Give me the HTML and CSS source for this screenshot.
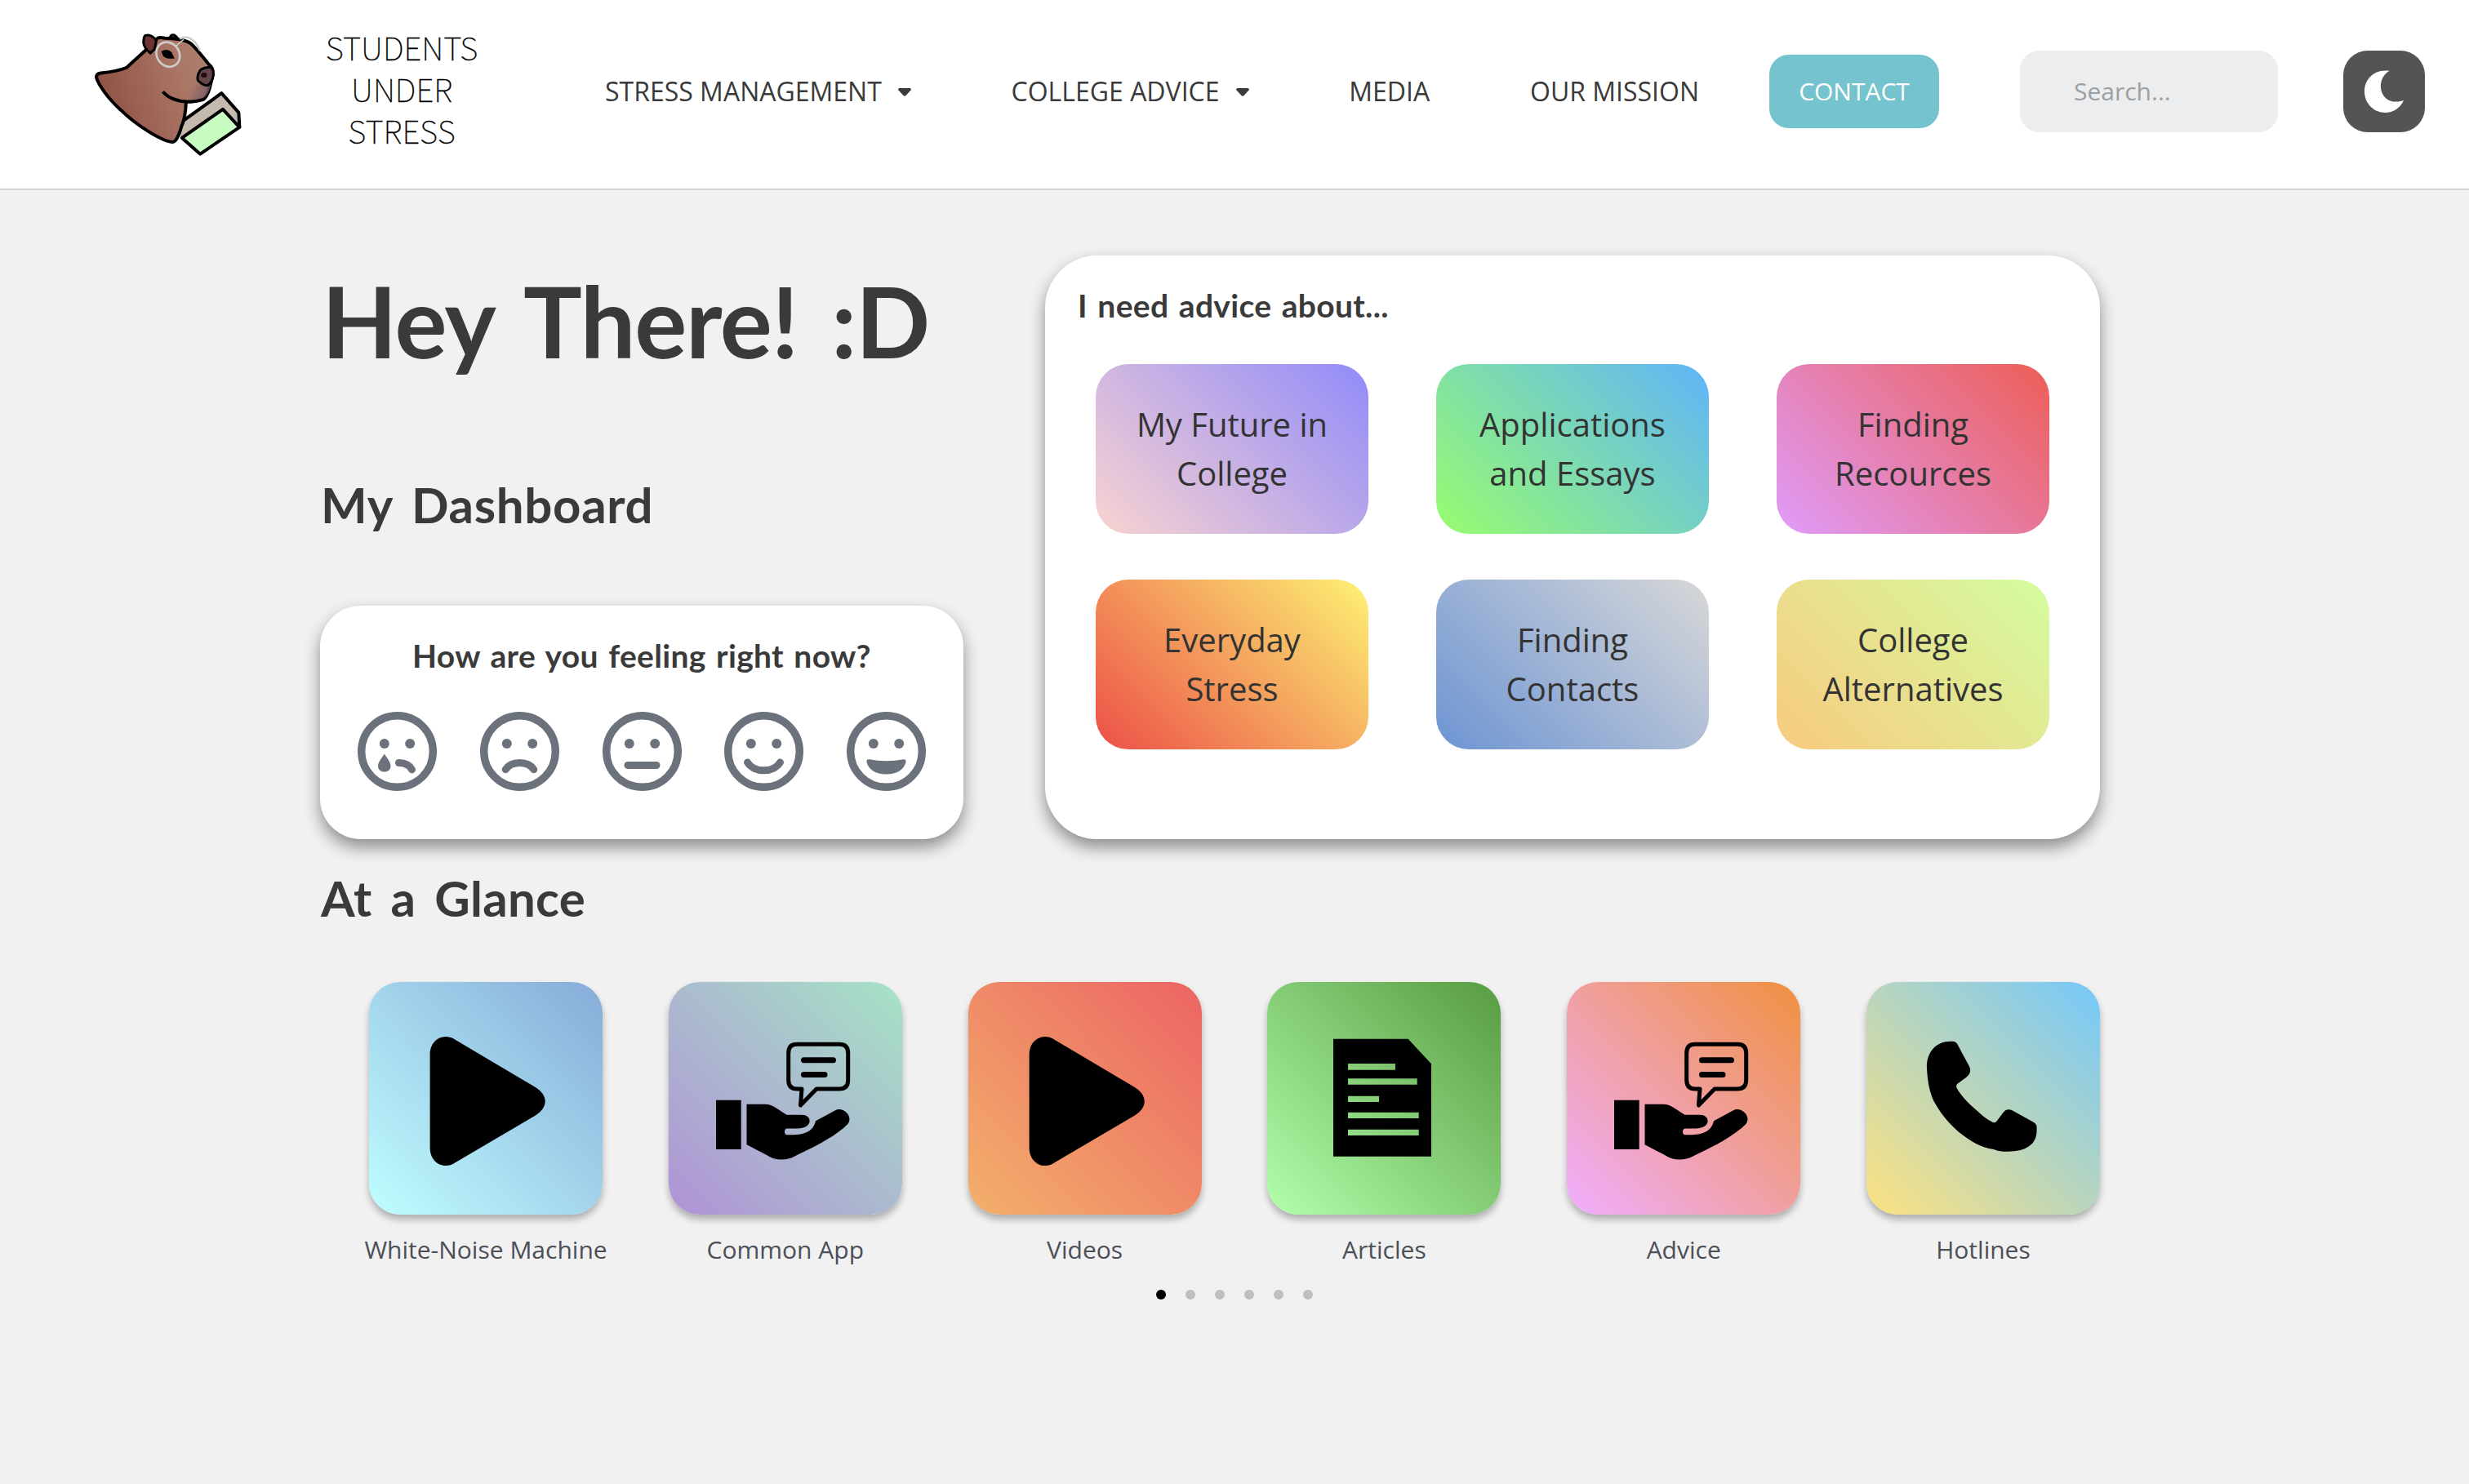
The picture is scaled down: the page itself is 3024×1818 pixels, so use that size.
FILE: index.html
```html
<!DOCTYPE html>
<html lang="en">
<head>
<meta charset="utf-8">
<title>Students Under Stress</title>
<link rel="stylesheet" href="styles.css">
</head>
<body>
<svg class="defs" width="0" height="0" aria-hidden="true">
  <defs>
    <symbol id="play" viewBox="0 0 286 285">
      <path d="M74.6 89C74.6 76 83 67 94 67C99 67 102 68.500 106 71L203 128.500C220 138.500 220 154 203 164L106 221C102 223.500 99 225 94 225C83 225 74.600 216 74.600 203Z"/>
    </symbol>
    <symbol id="advice" viewBox="0 0 286 285">
      <path d="M58 144.700H88.700V205H58ZM95.500 149.700H118C128 149.700 136 158 144.500 162.700H163C169 162.700 172.600 166 172.600 170.300C172.600 176 166 179.500 158 179.500H145C141 179.500 141 187.300 145 187.300C160 187.500 176 187 180 170.300L202.600 158C212 151 226 163 220 173C219 175 217 176 214.700 178.500C196 194 172 205 154 213.700C144 219 130 219 120 212L95.500 199.300Z"/>
      <path fill="none" stroke="#000" stroke-width="5" stroke-linejoin="round" d="M157 76.300H209Q219.700 76.300 219.700 87V120Q219.700 131 209 131H181L161.500 151L163 131H157Q146.700 131 146.700 120V87Q146.700 76.300 157 76.300Z"/>
      <path fill="none" stroke="#000" stroke-width="7" stroke-linecap="round" d="M165.500 95.700H201.500M165.500 113.400H191"/>
    </symbol>
    <symbol id="article" viewBox="0 0 286 285">
      <path fill-rule="evenodd" d="M81 69.700H172.600L201 100.300V213.700H81ZM99 100V107.700H157V100ZM99 118.300V125.700H183.700V118.300ZM99 139.700V147H137V139.700ZM99 159.700V167H185.700V159.700ZM99 180.700V188H185.700V180.700Z"/>
    </symbol>
    <symbol id="phone" viewBox="0 0 286 285">
      <path d="M108.500 73.300C88 70 73 84 74 106C75 124 78 139 85 150.300C93 164 102 174 113 183.700C127 195 141 203 155.700 205C162 207.500 166 207.700 172 207.700C194 208 209 200 208.600 181C208.600 177 209 174.500 205 172L179 157.500C174 155 170 156 167.500 160L159.500 170.500C158 172.500 156 172.500 154 171.500C147 168 142 164 137 159C126 150 116 140 110.400 129.500C109.500 127.500 110.500 125.500 112 124.300L122 117C128 112 128 108 126 103.500L111 75.500Z"/>
    </symbol>
  </defs>
</svg>

<header class="header">
  <svg class="logo" viewBox="75 60 545 455" aria-label="Capybara reading a book">
    <defs>
      <linearGradient id="fur" x1="85" y1="300" x2="515" y2="170" gradientUnits="userSpaceOnUse">
        <stop offset="0" stop-color="#8f5145"/><stop offset=".7" stop-color="#aa7564"/><stop offset="1" stop-color="#b08070"/>
      </linearGradient>
      <linearGradient id="chin" x1="425" y1="270" x2="490" y2="300" gradientUnits="userSpaceOnUse">
        <stop offset="0" stop-color="#735866" stop-opacity="0"/><stop offset="1" stop-color="#735866" stop-opacity=".9"/>
      </linearGradient>
    </defs>
    <g stroke="#000" stroke-linejoin="round" stroke-linecap="round">
      <path fill="#c4bbae" stroke="none" d="M396 388L543 282L606 353L609 405L548 342L392 443Z"/>
      <path fill="none" stroke-width="12" d="M406 381L543 282L606 353L609 405"/>
      <path fill="#c8fdc2" stroke-width="12" d="M398 446L548 341L609 407L465 505Z"/>
      <path fill="#6d3532" stroke-width="9" d="M354 80Q356 65 370 69Q382 76 382 84Z"/>
      <path fill="url(#fur)" stroke-width="12" d="M310 79Q320 77 335 80C365 81 412 84 432 101C450 117 475 150 498 178Q514 190 511 215L500 262Q492 292 478 304Q450 314 413 314C412 345 405 385 396 405C388 432 378 462 362 461C325 458 230 400 175 345C125 300 91 250 84 224Q84 210 100 208Q160 203 195 188L265 124Z"/>
      <path fill="url(#chin)" stroke="none" d="M430 240L504 250L498 270Q489 294 475 300L425 307Z"/>
      <path fill="none" stroke-width="12" stroke-linecap="butt" d="M328 276C345 297 378 312 415 313"/>
      <path fill="#6d3532" stroke-width="9" d="M264 70Q285 64 304 88L298 120L282 135Q256 112 257 95Q257 74 264 70Z"/>
      <path fill="#64464a" stroke-width="9" d="M465 198Q476 186 506 187Q517 203 511 226Q505 246 492 254Q475 254 457 236Q451 217 465 198Z"/>
    </g>
    <ellipse cx="479" cy="216" rx="11" ry="9" fill="#240a0c"/>
    <path d="M322 129Q345 116 360 132L371 154Q340 159 329 145Z"/>
    <g fill="none" stroke="#ccc" stroke-width="8">
      <ellipse cx="347" cy="140" rx="41" ry="47" transform="rotate(-35 347 140)"/>
      <path stroke-width="5" d="M376 109L404 85"/>
      <path stroke-width="7" d="M390 83C420 66 450 87 464 127"/>
    </g>
  </svg>
  <div class="brand">STUDENTS<br>UNDER<br>STRESS</div>
  <nav class="nav">
    <a class="nav-item">STRESS MANAGEMENT<svg class="caret" viewBox="0 0 16 10"><path d="M1.500 0H14.500Q16.500 .5 15.500 2.500L9.500 9Q8 10.500 6.500 9L.5 2.500Q-.5 .5 1.500 0Z"/></svg></a>
    <a class="nav-item">COLLEGE ADVICE<svg class="caret" viewBox="0 0 16 10"><path d="M1.500 0H14.500Q16.500 .5 15.500 2.500L9.500 9Q8 10.500 6.500 9L.5 2.500Q-.5 .5 1.500 0Z"/></svg></a>
    <a class="nav-item">MEDIA</a>
    <a class="nav-item">OUR MISSION</a>
  </nav>
  <a class="contact">CONTACT</a>
  <div class="search">Search...</div>
  <button class="theme" aria-label="Dark mode">
    <svg viewBox="0 0 48 52"><path d="M30.500 .8C17 9 17 27 27 35C33 39.500 40 39.300 48 37C44 46 35 52 25.500 52C11 52 0 40.500 0 26C0 11 12-2 30.500 .8Z" fill="#fff"/></svg>
  </button>
</header>

<main class="main">
  <div class="top">
    <div class="intro">
      <h1 class="hello">Hey There! :D</h1>
      <h2 class="section-title dashboard">My Dashboard</h2>
      <section class="card feeling">
        <h3 class="card-title mood-title">How are you feeling right now?</h3>
        <div class="faces">
          <svg class="face" viewBox="-48.500 -48.500 97 97"><circle class="ring" r="43.800"/><circle cx="-15.700" cy="-9.500" r="6"/><circle cx="15.700" cy="-9.500" r="6"/><path d="M-15.700 3C-12 9-8 13-8 18C-8 22.500-11.500 25-15.700 25S-23.500 22.500-23.500 18C-23.500 13-19.500 9-15.700 3Z"/><path class="mouth" d="M2 14Q13.500 14 18 22.300"/></svg>
          <svg class="face" viewBox="-48.500 -48.500 97 97"><circle class="ring" r="43.800"/><circle cx="-15.700" cy="-9.500" r="6"/><circle cx="15.700" cy="-9.500" r="6"/><path class="mouth" d="M-17.300 22.200C-10 11.300 10 11.300 17.300 22.200"/></svg>
          <svg class="face" viewBox="-48.500 -48.500 97 97"><circle class="ring" r="43.800"/><circle cx="-15.700" cy="-9.500" r="6"/><circle cx="15.700" cy="-9.500" r="6"/><rect x="-22" y="12.500" width="44" height="9" rx="4.500"/></svg>
          <svg class="face" viewBox="-48.500 -48.500 97 97"><circle class="ring" r="43.800"/><circle cx="-15.700" cy="-9.500" r="6"/><circle cx="15.700" cy="-9.500" r="6"/><path class="mouth" d="M-20 13.500C-12 26.500 12 26.500 20 13.500"/></svg>
          <svg class="face" viewBox="-48.500 -48.500 97 97"><circle class="ring" r="43.800"/><circle cx="-15.700" cy="-9.500" r="6"/><circle cx="15.700" cy="-9.500" r="6"/><path d="M-21 9.700Q0 14 21 9.700Q24.500 9.500 24 13C22 22 13 28 0 28S-22 22-24 13Q-24.500 9.500-21 9.700Z"/></svg>
        </div>
      </section>
    </div>
    <section class="card advice">
      <h3 class="card-title advice-title">I need advice about...</h3>
      <div class="topics">
        <a class="topic future">My Future in<br>College</a>
        <a class="topic apps">Applications<br>and Essays</a>
        <a class="topic resources">Finding<br>Recources</a>
        <a class="topic everyday">Everyday<br>Stress</a>
        <a class="topic contacts">Finding<br>Contacts</a>
        <a class="topic alternatives">College<br>Alternatives</a>
      </div>
    </section>
  </div>
  <h2 class="section-title glance">At a Glance</h2>
  <div class="slides">
    <a class="slide"><svg class="tile noise"><use href="#play"/></svg><span class="label">White-Noise Machine</span></a>
    <a class="slide"><svg class="tile common"><use href="#advice"/></svg><span class="label">Common App</span></a>
    <a class="slide"><svg class="tile videos"><use href="#play"/></svg><span class="label">Videos</span></a>
    <a class="slide"><svg class="tile articles"><use href="#article"/></svg><span class="label">Articles</span></a>
    <a class="slide"><svg class="tile tips"><use href="#advice"/></svg><span class="label">Advice</span></a>
    <a class="slide"><svg class="tile hotlines"><use href="#phone"/></svg><span class="label">Hotlines</span></a>
  </div>
  <div class="dots"><i class="dot active"></i><i class="dot"></i><i class="dot"></i><i class="dot"></i><i class="dot"></i><i class="dot"></i></div>
</main>
</body>
</html>
```
FILE: styles.css
```css
* { box-sizing: border-box; }

body {
  margin: 0;
  width: 3024px;
  height: 1818px;
  overflow: hidden;
  background: #f1f1f1;
  color: #3a3a3a;
  font-family: "Open Sans", sans-serif;
}

.defs { display: block; height: 0; }

.header {
  display: flex;
  align-items: center;
  height: 233px;
  padding: 0 54px 7px 115px;
  background: #fff;
  border-bottom: 2px solid #d3d3d3;
}

.logo { width: 182px; height: 152px; margin-top: 8px; }

.brand {
  width: 200px;
  margin: -8px 0 0 95px;
  color: #000;
  font-family: "Noto Sans CJK SC", sans-serif;
  font-weight: 100;
  font-size: 38.700px;
  line-height: 51px;
  text-align: center;
  -webkit-text-stroke: .3px #000;
}

.nav {
  display: flex;
  flex: none;
  align-items: center;
  justify-content: space-between;
  width: 1340px;
  margin-left: 149px;
}
.nav-item { display: flex; align-items: center; font-size: 32px; line-height: 44px; white-space: nowrap; }
.caret { width: 16px; height: 10px; margin: 1px 0 0 20px; fill: #3a3a3a; }

.contact {
  width: 208px;
  height: 90px;
  margin-left: 86px;
  border-radius: 24px;
  background: #75c3ce;
  color: #fff;
  font-size: 30px;
  line-height: 90px;
  text-align: center;
}

.search {
  width: 316px;
  height: 100px;
  margin-left: 99px;
  padding-left: 66px;
  border-radius: 24px;
  background: #ebedef;
  color: #9e9fa0;
  font-size: 30px;
  line-height: 100px;
}

.theme {
  display: flex;
  align-items: center;
  justify-content: center;
  width: 100px;
  height: 100px;
  margin-left: auto;
  padding: 0;
  border: 0;
  border-radius: 30px;
  background: #545454;
}
.theme svg { width: 48px; height: 52px; }

.main { padding: 80px 452px 0 392px; }

.top { display: grid; grid-template-columns: 788px 1292px; column-gap: 100px; height: 715px; }
.intro { display: flex; flex-direction: column; }

h1, h2, h3 { margin: 0; font-family: Lato, sans-serif; font-weight: 700; white-space: nowrap; }

.hello { padding-left: 2px; font-size: 120px; line-height: 160px; letter-spacing: -1.200px; word-spacing: 13px; }
.section-title { padding-left: 1px; font-size: 60px; line-height: 80px; letter-spacing: .3px; word-spacing: 8px; }
.dashboard { padding-top: 105px; letter-spacing: .7px; }
.card-title { font-size: 39px; line-height: 46px; letter-spacing: .3px; word-spacing: 2.700px; }

.card { background: #fff; box-shadow: 0 10px 20px rgba(0, 0, 0, .42); }
.feeling { height: 286px; margin-top: auto; border-radius: 50px; padding: 38px 46px 0; }
.mood-title { text-align: center; }
.faces { display: flex; justify-content: space-between; margin-top: 46px; }
.face { width: 97px; height: 97px; fill: #6b727c; }
.ring { fill: none; stroke: #6b727c; stroke-width: 9.400px; }
.mouth { fill: none; stroke: #6b727c; stroke-width: 9px; stroke-linecap: round; }

.advice { border-radius: 64px; padding: 38px 62px 0; }
.advice-title { margin-left: -22px; }
.topics { display: grid; grid-template-columns: repeat(3, 334px); gap: 56px 83px; margin-top: 49px; }
.topic {
  display: flex;
  align-items: center;
  justify-content: center;
  height: 208px;
  border-radius: 40px;
  color: #333;
  font-size: 40px;
  line-height: 60px;
  text-align: center;
}
.future { background: linear-gradient(45deg, #f9d3d0, #918bf9); }
.apps { background: linear-gradient(45deg, #98fd6e, #5fb4f9); }
.resources { background: linear-gradient(45deg, #e09cfa, #ec5e56); }
.everyday { background: linear-gradient(45deg, #ec4f47, #fdf274); }
.contacts { background: linear-gradient(45deg, #6d94d3, #d8d8d8); }
.alternatives { background: linear-gradient(45deg, #f8ca80, #d4fd9f); }

.glance { margin-top: 32px; }

.slides { display: flex; justify-content: space-between; margin: 63px 0 0 60px; }
.slide { display: flex; flex-direction: column; align-items: center; width: 286px; }
.tile { display: block; width: 286px; height: 285px; border-radius: 38px; box-shadow: 0 6px 8px rgba(0, 0, 0, .28); }
.label { margin-top: 21px; color: #4b4f58; font-size: 30px; line-height: 44px; white-space: nowrap; }
.noise { background: linear-gradient(45deg, #bffeff, #86abd8); }
.common { background: linear-gradient(45deg, #b092d6, #a6e3c6); }
.videos { background: linear-gradient(45deg, #f3b06b, #ec6464); }
.articles { background: linear-gradient(45deg, #b2ffac, #579b41); }
.tips { background: linear-gradient(45deg, #f0aeff, #f0903f); }
.hotlines { background: linear-gradient(45deg, #fde280, #74c8fb); }

.dots { display: flex; gap: 24px; margin: 27px 0 0 1024px; }
.dot { width: 12px; height: 12px; border-radius: 50%; background: #bfbfbf; }
.dot.active { background: #000; }
```
